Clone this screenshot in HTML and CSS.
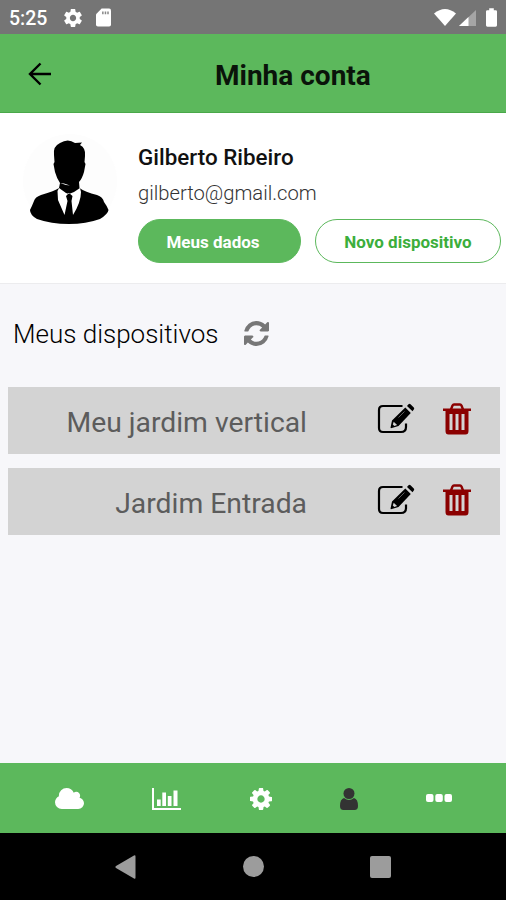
FILE: index.html
```html
<!DOCTYPE html>
<html lang="pt-BR">
<head>
<meta charset="UTF-8">
<meta name="viewport" content="width=device-width, initial-scale=1">
<title>Minha conta</title>
<link rel="stylesheet" href="styles.css">
</head>
<body>

<div class="status-bar">
  <span class="clock">5:25</span>
  <svg class="status-gear" viewBox="2 2 20 20"><path d="M19.43 12.98c.04-.32.07-.64.07-.98s-.03-.66-.07-.98l2.11-1.65c.19-.15.24-.42.12-.64l-2-3.46c-.12-.22-.39-.3-.61-.22l-2.49 1c-.52-.4-1.08-.73-1.69-.98l-.38-2.65C14.46 2.18 14.25 2 14 2h-4c-.25 0-.46.18-.49.42l-.38 2.65c-.61.25-1.17.59-1.69.98l-2.49-1c-.23-.09-.49 0-.61.22l-2 3.46c-.13.22-.07.49.12.64l2.11 1.65c-.04.32-.07.65-.07.98s.03.66.07.98l-2.11 1.65c-.19.15-.24.42-.12.64l2 3.46c.12.22.39.3.61.22l2.49-1c.52.4 1.08.73 1.69.98l.38 2.65c.03.24.24.42.49.42h4c.25 0 .46-.18.49-.42l.38-2.65c.61-.25 1.17-.59 1.69-.98l2.49 1c.23.09.49 0 .61-.22l2-3.46c.12-.22.07-.49-.12-.64l-2.11-1.65zM12 15.5c-1.93 0-3.5-1.57-3.5-3.5s1.57-3.5 3.5-3.5 3.5 1.57 3.5 3.5-1.57 3.5-3.5 3.5z"/></svg>
  <svg class="status-sd" viewBox="0 0 16 19"><path d="M6 0h8q2 0 2 2v15q0 2-2 2H2q-2 0-2-2V6z"/><path class="sd-pins" d="M6.5 3h1.6v3H6.5zM9.3 3h1.6v3H9.3zM12 3h1.6v3H12z"/></svg>
  <div class="status-right">
    <svg class="wifi" viewBox="0 0 22 17"><path d="M0 4.5Q11-4.500 22 4.500L11 17z"/></svg>
    <svg class="signal" viewBox="0 0 17 16"><path class="faint" d="M17 0v16H0z"/><path d="M9.500 7v9H0z"/></svg>
    <svg class="battery" viewBox="0 0 12 20"><path d="M3.500 0h5v2H10.500q1.500 0 1.500 1.500v15q0 1.500-1.500 1.500h-9Q0 20 0 18.500v-15Q0 2 1.500 2h2z"/></svg>
  </div>
</div>

<header class="header">
  <svg class="back" viewBox="0 0 24 24"><path d="M23 12H2M12.500 1.500L2 12l10.500 10.500"/></svg>
  <h1>Minha conta</h1>
</header>

<section class="profile">
  <svg class="avatar" viewBox="0 0 100 100">
    <circle class="halo" cx="50" cy="50" r="47"/>
    <path d="M34 24Q33 15 40 12Q48 7 55 12L62 11.500L60 14Q66 17 65 25L64.500 31L65.500 33L64 41Q62 48 59 51L59.500 57Q65 61 77 64Q83 66 84 71Q87 75 88.500 79Q88 83 80 88Q66 93 49 93Q31 93 17 88Q10 84 10 79Q12 75 14 70Q15 66 21 64Q35 60 39 57L40 52Q37 48 35 41L33.500 33L34.500 31z"/>
    <path class="shirt" d="M39 57L46 62L49 63L54 61L60 57L61 61Q61 71 53 84L51.500 70L52.500 65L49 62L46 65L47.500 70L44.500 84L38 69L37.500 60z"/>
    <path class="shirt" d="M40 52L44 52.500L50 54.500L46 54z"/>
  </svg>
  <div class="profile-info">
    <h2>Gilberto Ribeiro</h2>
    <p>gilberto@gmail.com</p>
    <div class="actions">
      <button class="btn btn-fill">Meus dados</button>
      <button class="btn btn-line">Novo dispositivo</button>
    </div>
  </div>
</section>

<main class="devices">
  <div class="devices-title">
    <h3>Meus dispositivos</h3>
    <svg class="refresh" viewBox="128 128 1536 1536"><path d="M1639 1056q0 5-1 7-64 268-268 434.500t-478 166.500q-146 0-282.500-55t-243.500-157l-129 129q-19 19-45 19t-45-19-19-45v-448q0-26 19-45t45-19h448q26 0 45 19t19 45-19 45l-137 137q71 66 161 102t187 36q134 0 250-65t186-179q11-17 53-117 8-23 30-23h192q13 0 22.500 9.500t9.500 22.500zm25-800v448q0 26-19 45t-45 19h-448q-26 0-45-19t-19-45 19-45l138-138q-148-137-349-137-134 0-250 65t-186 179q-11 17-53 117-8 23-30 23h-199q-13 0-22.500-9.500t-9.500-22.500v-7q65-268 270-434.500t480-166.500q146 0 284 55.500t245 156.500l130-129q19-19 45-19t45 19 19 45z"/></svg>
  </div>

  <div class="device">
    <span class="device-name">Meu jardim vertical</span>
    <svg class="edit" viewBox="0 0 38 32">
      <path class="sheet" d="M25.500 3H6Q2 3 2 7v18q0 4 4 4h18q5 0 5-5v-3.500"/>
      <path d="M30 3L31.500 1.200Q32.500 .3 33.500 1.200l3.300 3.300q.9 1 0 2L35.500 8.300zM28.300 4.500L33.800 10L21.500 23L14 25.300Q13.300 25 13.600 24.300L15 17.500z"/>
      <path class="notch" d="M16.700 18.700l3.400 3.400-2.800 1-1.500-1.500z"/>
      <path class="groove" d="M21.500 14.500l6-6"/>
    </svg>
    <svg class="trash" viewBox="0 0 28 32">
      <path class="handle" d="M8 6.500L9.500 2.500Q10 1.500 11 1.500h6q1 0 1.500 1L20 6.500"/>
      <path fill-rule="evenodd" d="M0 5.500h28v2.500h-2.500V28q0 3.500-3 3.500h-17q-3 0-3-3.500V8H0zM6.500 11V27H9.500V11zM12.500 11V27h3V11zM18.500 11V27H21.500V11z"/>
    </svg>
  </div>

  <div class="device">
    <span class="device-name">Jardim Entrada</span>
    <svg class="edit" viewBox="0 0 38 32">
      <path class="sheet" d="M25.500 3H6Q2 3 2 7v18q0 4 4 4h18q5 0 5-5v-3.500"/>
      <path d="M30 3L31.500 1.200Q32.500 .3 33.500 1.200l3.300 3.300q.9 1 0 2L35.500 8.300zM28.300 4.500L33.800 10L21.500 23L14 25.300Q13.300 25 13.600 24.300L15 17.500z"/>
      <path class="notch" d="M16.700 18.700l3.400 3.400-2.800 1-1.500-1.500z"/>
      <path class="groove" d="M21.500 14.500l6-6"/>
    </svg>
    <svg class="trash" viewBox="0 0 28 32">
      <path class="handle" d="M8 6.500L9.500 2.500Q10 1.500 11 1.500h6q1 0 1.500 1L20 6.500"/>
      <path fill-rule="evenodd" d="M0 5.500h28v2.500h-2.500V28q0 3.500-3 3.500h-17q-3 0-3-3.500V8H0zM6.500 11V27H9.500V11zM12.500 11V27h3V11zM18.500 11V27H21.500V11z"/>
    </svg>
  </div>
</main>

<nav class="tabs">
  <svg class="tab-cloud" viewBox="64 128 1920 1408" preserveAspectRatio="none"><path d="M1984 1152q0 159-112.500 271.500t-271.500 112.500h-1088q-185 0-316.500-131.500t-131.500-316.500q0-132 71-241.500t187-163.500q-2-28-2-43 0-212 150-362t362-150q158 0 286.500 88t187.500 230q70-62 166-62 106 0 181 75t75 181q0 75-41 138 129 30 213 134.500t84 239.500z"/></svg>
  <svg class="tab-chart" viewBox="0 0 29 22"><path d="M0 0h2v20h27v2H0zM5 11.500h3.700V18H5zM10.300 4.500H14V18h-3.700zM15.800 8h3.700v10h-3.700zM21.500 2.500h4V18h-4z"/></svg>
  <svg class="tab-gear" viewBox="128 128 1536 1536"><path d="M1152 896q0-106-75-181t-181-75-181 75-75 181 75 181 181 75 181-75 75-181zm512-109v222q0 12-8 23t-20 13l-185 28q-19 54-39 91 35 50 107 138 10 12 10 25t-9 23q-27 37-99 108t-94 71q-12 0-26-9l-138-108q-44 23-91 38-16 136-29 186-7 28-36 28h-222q-14 0-24.500-8.500t-11.500-21.500l-28-184q-49-16-90-37l-141 107q-10 9-25 9-14 0-25-11-126-114-165-168-7-10-7-23 0-12 8-23 15-21 51-66.500t54-70.500q-27-50-41-99l-183-27q-13-2-21-12.500t-8-23.500v-222q0-12 8-23t19-13l186-28q14-46 39-92-40-57-107-138-10-12-10-24 0-10 9-23 26-36 98.500-107.500t94.500-71.500q13 0 26 10l138 107q44-23 91-38 16-136 29-186 7-28 36-28h222q14 0 24.500 8.500t11.500 21.500l28 184q49 16 90 37l142-107q9-9 24-9 13 0 25 10 129 119 165 170 7 8 7 22 0 12-8 23-15 21-51 66.500t-54 70.500q26 50 41 98l183 28q13 2 21 12.500t8 23.500z"/></svg>
  <svg class="tab-user" viewBox="0 0 18 22"><circle cx="9" cy="5.500" r="5.500"/><path d="M4 10q5 4 10 0q4 1 4 8q0 4-3.500 4h-11Q0 22 0 18q0-7 4-8z"/></svg>
  <svg class="tab-more" viewBox="0 0 26 8"><rect width="7.500" height="8" rx="2"/><rect x="9.300" width="7.500" height="8" rx="2"/><rect x="18.500" width="7.500" height="8" rx="2"/></svg>
</nav>

<div class="android-nav">
  <svg class="nav-back" viewBox="0 0 21 24"><path d="M19 .6q1.500-.8 1.500 1v21q0 1.800-1.500 1L1 13q-1.200-1 0-2z"/></svg>
  <span class="nav-home"></span>
  <span class="nav-recent"></span>
</div>

</body>
</html>
```
FILE: styles.css
```css
* {
  box-sizing: border-box;
}
body {
  margin: 0;
  height: 900px;
  font-family: Roboto, "Noto Sans", sans-serif;
  background: #f7f7fa;
  color: #111;
  display: flex;
  flex-direction: column;
  overflow: hidden;
}
h1, h2, h3, p {
  margin: 0;
  white-space: nowrap;
}
svg {
  display: block;
  flex: none;
}

/* status bar */
.status-bar {
  height: 34px;
  background: #757575;
  color: #fff;
  fill: #fff;
  display: flex;
  align-items: center;
  padding: 1px 8px 0 9px;
}
.clock {
  width: 55px;
  padding-top: 1px;
  font-size: 19.5px;
  font-weight: 500;
}
.status-gear {
  width: 18px;
  height: 18px;
}
.status-sd {
  width: 15px;
  height: 19px;
  margin-left: 14px;
}
.sd-pins {
  fill: #888;
}
.status-right {
  margin-left: auto;
  display: flex;
  align-items: center;
}
.wifi {
  width: 22px;
  height: 17px;
}
.signal {
  width: 17px;
  height: 16px;
  margin: 1px 10px 0 3px;
}
.faint {
  opacity: 0.35;
}
.battery {
  width: 11px;
  height: 19px;
  margin-right: 1px;
}

/* header */
.header {
  height: 79px;
  background: #5cb85c;
  border-bottom: 1px solid #49a849;
  display: flex;
  align-items: center;
  padding-left: 28px;
}
.back {
  width: 24px;
  height: 24px;
  margin-top: 2px;
  fill: none;
  stroke: #000;
  stroke-width: 2.4;
}
.header h1 {
  margin-left: 163px;
  padding-top: 5px;
  font-size: 28px;
  font-weight: 700;
  color: #0a140a;
}

/* profile */
.profile {
  height: 171px;
  background: #fff;
  border-bottom: 1px solid #ececee;
  display: flex;
  padding: 18px 5px 0 20px;
}
.avatar {
  width: 100px;
  height: 100px;
}
.halo {
  fill: #fdfdfd;
}
.shirt {
  fill: #fff;
}
.profile-info {
  margin-left: 18px;
  padding-top: 12px;
}
.profile-info h2 {
  font-size: 22.4px;
  line-height: 28px;
  font-weight: 500;
}
.profile-info p {
  margin-top: 9px;
  font-size: 20.2px;
  line-height: 26px;
  font-weight: 300;
  color: #333;
}
.actions {
  display: flex;
  gap: 14px;
  margin-top: 13px;
}
.btn {
  height: 44px;
  border: 1.5px solid #5cb85c;
  border-radius: 22px;
  padding: 1px 0 0;
  font-family: inherit;
  font-size: 17px;
  font-weight: 700;
  white-space: nowrap;
}
.btn-fill {
  width: 163px;
  padding-right: 13px;
  background: #5cb85c;
  color: #fff;
}
.btn-line {
  width: 186px;
  background: #fff;
  color: #3cae3c;
}

/* devices */
.devices {
  flex: 1;
  padding: 0 6px 0 8px;
}
.devices-title {
  height: 103px;
  display: flex;
  align-items: center;
  padding: 0 0 4px 5px;
}
.devices-title h3 {
  width: 231px;
  font-size: 26px;
  font-weight: 300;
  color: #000;
}
.refresh {
  width: 25px;
  height: 25px;
  fill: #777;
}
.device {
  height: 67px;
  margin-bottom: 14.4px;
  background: #d3d3d3;
  display: flex;
  align-items: center;
}
.device-name {
  width: 299px;
  padding-top: 3px;
  text-align: right;
  font-size: 28.3px;
  font-weight: 400;
  color: #5c5c5c;
  white-space: nowrap;
}
.edit {
  width: 38px;
  height: 32px;
  margin: 0 0 4px 70px;
}
.sheet {
  fill: none;
  stroke: #000;
  stroke-width: 2.2;
}
.notch {
  fill: #d3d3d3;
}
.groove {
  fill: none;
  stroke: #777;
  stroke-width: 0.8;
}
.trash {
  width: 28px;
  height: 32px;
  margin: 0 0 3px 28px;
  fill: #8b0000;
}
.handle {
  fill: none;
  stroke: #8b0000;
  stroke-width: 2.4;
}

/* bottom tabs */
.tabs {
  height: 70px;
  background: #5cb85c;
  fill: #fff;
  display: flex;
  align-items: center;
  justify-content: space-between;
  padding: 0 54px 0 55px;
}
.tab-cloud {
  width: 29px;
  height: 21px;
}
.tab-chart {
  width: 29px;
  height: 22px;
  margin-top: 2px;
}
.tab-gear {
  width: 22px;
  height: 22px;
  margin-top: 2px;
}
.tab-user {
  width: 18px;
  height: 22px;
  margin-top: 2px;
  fill: #333;
}
.tab-more {
  width: 26px;
  height: 8px;
}

/* android buttons */
.android-nav {
  height: 67px;
  background: #000;
  display: flex;
  align-items: center;
  justify-content: space-between;
  padding: 0 115px;
}
.nav-back {
  width: 21px;
  height: 24px;
  fill: #9c9c9c;
}
.nav-home {
  width: 21px;
  height: 21px;
  border-radius: 50%;
  background: #9c9c9c;
}
.nav-recent {
  width: 21px;
  height: 22px;
  border-radius: 2px;
  background: #9c9c9c;
}
```
